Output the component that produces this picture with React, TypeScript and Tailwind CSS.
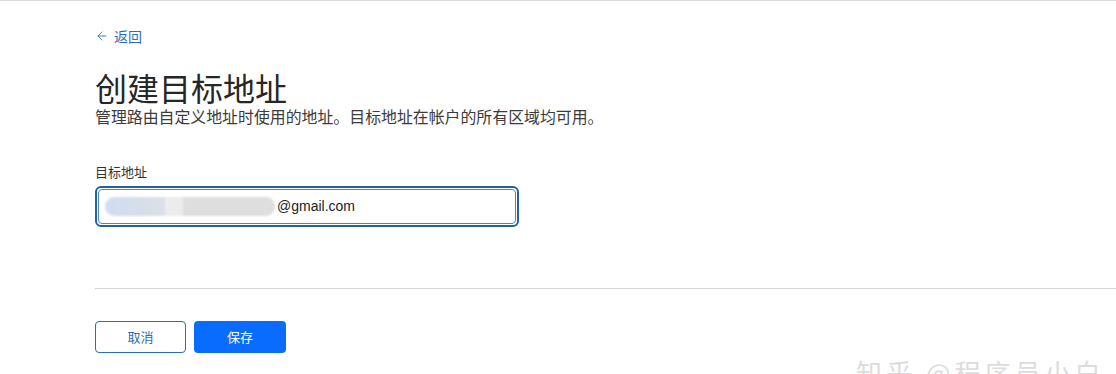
import { ArrowLeft } from "lucide-react";

const font = { fontFamily: '"Microsoft YaHei", "Noto Sans CJK SC", "Noto Sans", sans-serif' };

const App = () => {
  return (
    <div className="relative w-[1116px] h-[374px] bg-white overflow-hidden border-t border-[#d9d9d9]" style={font}>
      <div className="pl-[95px] pt-[26px]">
        {/* back link */}
        <a className="flex items-center gap-[5px] text-[14px] leading-[18px] text-[#2a6db5]">
          <ArrowLeft size={14} strokeWidth={1.5} />
          <span>返回</span>
        </a>

        <h1 className="mt-[24px] text-[32px] leading-[36px] text-[#262626] font-normal">创建目标地址</h1>
        <p className="mt-px text-[15.9px] leading-[22px] text-[#3b3b3b]">
          管理路由自定义地址时使用的地址。目标地址在帐户的所有区域均可用。
        </p>

        {/* field */}
        <div className="mt-[36px] text-[13px] leading-[16px] text-[#333]">目标地址</div>
        <div className="mt-[6px] w-[424px] h-[41px] rounded-[6px] border-2 border-[#2262a2] p-px">
          <div className="h-full rounded-[4px] border border-[#4a86c4] flex items-center pl-[6px]">
            <div className="w-[170px] h-[19px] rounded-[10px] bg-gradient-to-r from-[#cfdcf0] via-[#e2e2e2] to-[#dcdcdc] blur-[1px] flex">
              <div className="w-[60px]" />
              <div className="w-[18px] bg-[#ececec]" />
              <div className="flex-1 bg-[#dedede] rounded-r-[10px]" />
            </div>
            <span className="ml-[2px] text-[14px] text-[#222]" style={{ fontFamily: '"Liberation Sans", Arial, sans-serif' }}>
              @gmail.com
            </span>
          </div>
        </div>

        <div className="mt-[61px] border-t border-[#d4d4d4]" />

        {/* buttons */}
        <div className="mt-[32px] flex gap-[8px]">
          <button className="w-[91px] h-[32px] rounded-[4px] border border-[#2a6db5] bg-white text-[13px] text-[#2a6db5]">
            取消
          </button>
          <button className="w-[92px] h-[32px] rounded-[4px] bg-[#0a6cff] text-[13px] text-white">
            保存
          </button>
        </div>
      </div>

      {/* watermark */}
      <div className="absolute left-[856px] top-[356px] text-[26px] leading-[30px] text-[#dcdcdc] whitespace-nowrap tracking-[4px]">
        知乎 @程序员小白
      </div>
    </div>
  );
};

export default App;
